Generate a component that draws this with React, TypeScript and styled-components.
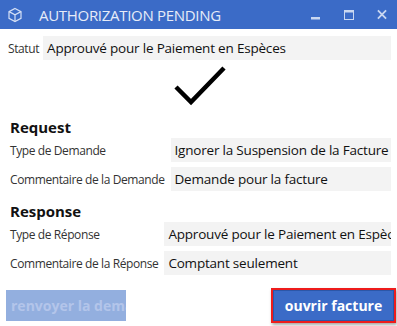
import React from 'react';
import styled, { createGlobalStyle } from 'styled-components';

const GlobalStyle = createGlobalStyle`
  html, body {
    margin: 0;
    padding: 0;
    background: #ffffff;
  }
  body {
    font-family: "Open Sans", "Noto Sans", sans-serif;
  }
`;

const Window = styled.div`
  width: 397px;
  height: 326px;
  display: flex;
  flex-direction: column;
  background: #ffffff;
  overflow: hidden;
`;

const TitleBar = styled.header`
  height: 29px;
  flex-shrink: 0;
  background: #3b6bc7;
  display: flex;
  align-items: center;
  padding-left: 7px;
  color: #e6ecf8;
`;

const TitleText = styled.span`
  margin-left: 16px;
  font-size: 15px;
  letter-spacing: -0.3px;
  flex: 1;
`;

const Controls = styled.div`
  display: flex;
  align-items: center;
  gap: 23px;
  padding-right: 10px;
`;

const CtrlBtn = styled.span`
  width: 10px;
  height: 10px;
  display: flex;
  align-items: center;
  justify-content: center;
`;

const Body = styled.main`
  flex: 1;
  display: flex;
  flex-direction: column;
  padding: 7px 6px 0 8px;
`;

const StatusRow = styled.div`
  display: flex;
  align-items: center;
  gap: 4px;
`;

const Label = styled.span<{ indent?: number }>`
  font-size: 12px;
  letter-spacing: -0.4px;
  color: #333333;
  white-space: nowrap;
  padding-left: ${(p) => p.indent ?? 0}px;
`;

const Field = styled.div`
  height: 24px;
  background: #f3f3f3;
  display: flex;
  align-items: center;
  padding-left: 4px;
  font-size: 13.5px;
  letter-spacing: -0.2px;
  color: #111111;
  white-space: nowrap;
  overflow: hidden;
  flex: 1;
`;

const CheckWrap = styled.div`
  display: flex;
  justify-content: center;
  margin-top: 4px;
`;

const SectionTitle = styled.h2`
  margin: 10px 0 1px 2px;
  font-size: 15px;
  line-height: 20px;
  font-weight: 700;
  color: #111111;
`;

const FieldGrid = styled.div`
  display: grid;
  grid-template-columns: auto 1fr;
  column-gap: 6px;
  row-gap: 5px;
  align-items: center;
`;

const Footer = styled.footer`
  display: flex;
  justify-content: space-between;
  align-items: center;
  margin-top: auto;
  padding: 0 0 3px 0;
  margin-left: -2px;
  margin-right: -5px;
`;

const Button = styled.button<{ disabled?: boolean }>`
  font-family: "Open Sans", "Noto Sans", sans-serif;
  font-size: 14px;
  font-weight: 700;
  height: 31px;
  border: none;
  white-space: nowrap;
  overflow: hidden;
  padding: 0 4px;
  background: ${(p) => (p.disabled ? '#93afdf' : '#3b6bc7')};
  color: ${(p) => (p.disabled ? '#b3c5ea' : '#ffffff')};
`;

const DisabledButton = styled(Button)`
  width: 120px;
  text-align: left;
  padding-left: 5px;
  margin-bottom: 1px;
`;

const PrimaryButton = styled(Button)`
  width: 125px;
  height: 35px;
  border: 2px solid #ee1c1c;
  box-shadow: inset 0 0 0 1px #2c56a8, 1px 2px 3px rgba(0, 0, 0, 0.35);
`;

const CubeIcon = () => (
  <svg width="16" height="16" viewBox="0 0 16 16" fill="none" stroke="#d5e0f5" strokeWidth="1.2">
    <path d="M8 1.5 L14 4.6 V11.4 L8 14.5 L2 11.4 V4.6 Z" />
    <path d="M2 4.6 L8 7.7 L14 4.6 M8 7.7 V14.5" />
  </svg>
);

const App = () => (
  <Window>
    <GlobalStyle />
    <TitleBar>
      <CubeIcon />
      <TitleText>AUTHORIZATION PENDING</TitleText>
      <Controls>
        <CtrlBtn>
          <svg width="10" height="10" viewBox="0 0 10 10">
            <rect x="0" y="7" width="9" height="2.5" fill="#c9d7f1" />
          </svg>
        </CtrlBtn>
        <CtrlBtn>
          <svg width="10" height="10" viewBox="0 0 10 10" fill="none">
            <rect x="0.5" y="0.5" width="9" height="9" stroke="#c9d7f1" />
            <rect x="0.5" y="0.5" width="9" height="2" fill="#c9d7f1" />
          </svg>
        </CtrlBtn>
        <CtrlBtn>
          <svg width="11" height="11" viewBox="0 0 11 11">
            <path d="M1 1 L10 10 M10 1 L1 10" stroke="#c9d7f1" strokeWidth="2" />
          </svg>
        </CtrlBtn>
      </Controls>
    </TitleBar>
    <Body>
      <StatusRow>
        <Label>Statut</Label>
        <Field>Approuvé pour le Paiement en Espèces</Field>
      </StatusRow>
      <CheckWrap>
        <svg width="54" height="43" viewBox="0 0 54 43">
          <path d="M3 23 L18 38 L51 4" stroke="#000" strokeWidth="4.5" fill="none" />
        </svg>
      </CheckWrap>
      <SectionTitle>Request</SectionTitle>
      <FieldGrid>
        <Label indent={2}>Type de Demande</Label>
        <Field>Ignorer la Suspension de la Facture</Field>
        <Label indent={2}>Commentaire de la Demande</Label>
        <Field>Demande pour la facture</Field>
      </FieldGrid>
      <SectionTitle>Response</SectionTitle>
      <FieldGrid>
        <Label indent={2}>Type de Réponse</Label>
        <Field>Approuvé pour le Paiement en Espèces</Field>
        <Label indent={2}>Commentaire de la Réponse</Label>
        <Field>Comptant seulement</Field>
      </FieldGrid>
      <Footer>
        <DisabledButton disabled>renvoyer la demande</DisabledButton>
        <PrimaryButton>ouvrir facture</PrimaryButton>
      </Footer>
    </Body>
  </Window>
);

export default App;
